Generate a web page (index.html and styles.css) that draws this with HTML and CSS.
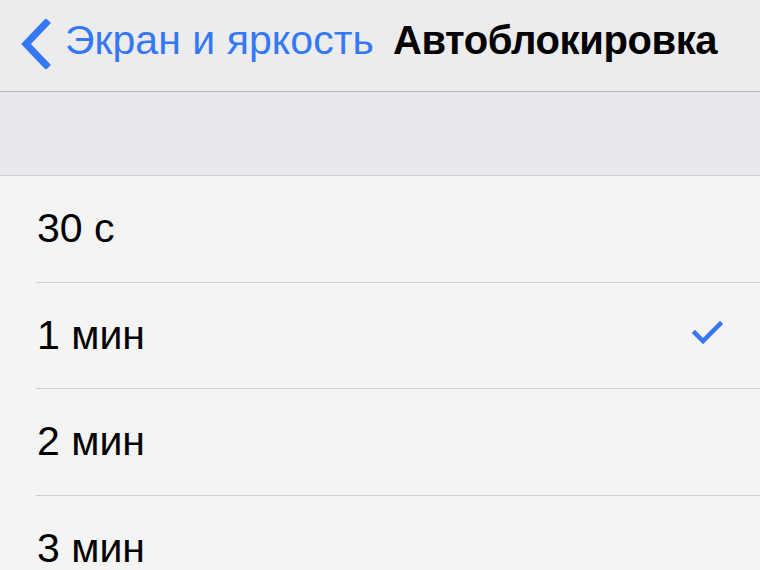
FILE: index.html
```html
<!DOCTYPE html>
<html lang="ru">
<head>
<meta charset="utf-8">
<link rel="stylesheet" href="styles.css">
</head>
<body>
<div class="screen">
  <header class="nav">
    <div class="back">
      <svg class="chev" width="32" height="50" viewBox="0 0 32 50"><path d="M27 4 L7 25 L27 46" fill="none" stroke="#3478f6" stroke-width="7" stroke-linecap="square" stroke-linejoin="miter"/></svg>
      <span class="back-text">Экран и яркость</span>
    </div>
    <div class="title">Автоблокировка</div>
  </header>
  <div class="section-gap"></div>
  <ul class="list">
    <li class="row"><span class="label">30 с</span></li>
    <li class="row"><span class="label">1 мин</span>
      <svg class="check" width="32" height="26" viewBox="0 0 32 26"><path d="M3 13 L11 21 L28 4" fill="none" stroke="#3478f6" stroke-width="4.5" stroke-linecap="square"/></svg>
    </li>
    <li class="row"><span class="label">2 мин</span></li>
    <li class="row"><span class="label">3 мин</span></li>
  </ul>
</div>
</body>
</html>
```
FILE: styles.css
```css
* { box-sizing: border-box; }
html, body { margin: 0; padding: 0; }
body {
  width: 760px;
  height: 570px;
  overflow: hidden;
  background: #f4f4f4;
  font-family: "Liberation Sans", Arial, sans-serif;
}
.screen { width: 760px; }
.nav {
  height: 92px;
  background: #ececee;
  border-bottom: 1px solid #b9b9bb;
  display: flex;
  align-items: center;
  padding-left: 19px;
  padding-bottom: 10px;
}
.back {
  display: flex;
  align-items: center;
  color: #3478f6;
}
.chev { display: block; margin-top: 6px; }
.back-text {
  font-size: 41px;
  margin-left: 14px;
  letter-spacing: 0.05px;
}
.title {
  font-size: 40px;
  font-weight: bold;
  color: #000;
  margin-left: 19px;
  letter-spacing: -0.4px;
}
.section-gap {
  height: 84px;
  background: #e8e8ec;
  border-bottom: 1px solid #d0d0d4;
}
.list {
  list-style: none;
  margin: 0;
  padding: 0 0 0 36px;
  background: #f4f4f4;
}
.row {
  height: 106.5px;
  display: flex;
  align-items: center;
  justify-content: space-between;
  border-bottom: 1px solid #cfcfd1;
  padding-right: 36px;
}
.label {
  font-size: 41px;
  color: #000;
  padding-left: 1px;
}
.check { display: block; margin-top: -4px; }
```
